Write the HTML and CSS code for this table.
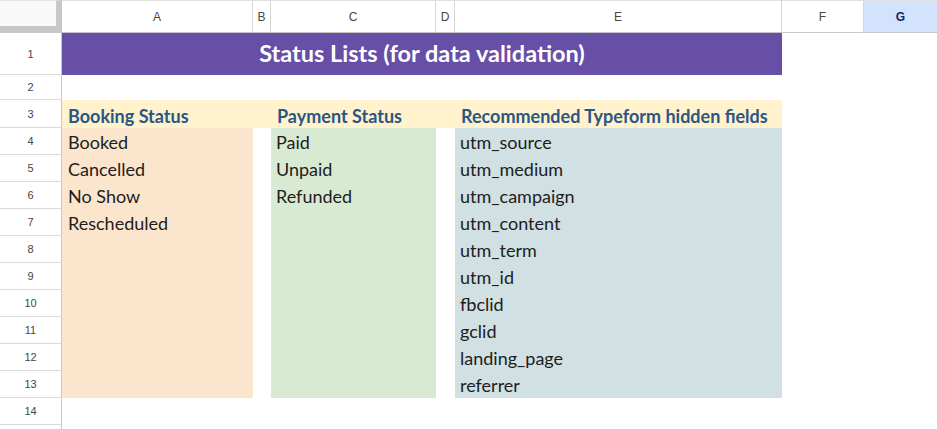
FILE: index.html
```html
<!DOCTYPE html>
<html>
<head>
<meta charset="utf-8">
<link rel="stylesheet" href="styles.css">
</head>
<body>
<div class="sheet">
  <div class="corner"></div>
  <div class="colh">A</div>
  <div class="colh">B</div>
  <div class="colh">C</div>
  <div class="colh">D</div>
  <div class="colh">E</div>
  <div class="colh">F</div>
  <div class="colh sel">G</div>

  <div class="rowh">1</div>
  <div class="cell title">Status Lists (for data validation)</div>
  <div class="cell"></div>
  <div class="cell"></div>

  <div class="rowh">2</div>
  <div class="cell"></div><div class="cell"></div><div class="cell"></div><div class="cell"></div><div class="cell"></div><div class="cell"></div><div class="cell"></div>

  <div class="rowh">3</div>
  <div class="cell hd">Booking Status</div>
  <div class="cell hd"></div>
  <div class="cell hd">Payment Status</div>
  <div class="cell hd"></div>
  <div class="cell hd">Recommended Typeform hidden fields</div>
  <div class="cell"></div><div class="cell"></div>

  <div class="rowh">4</div>
  <div class="cell bk">Booked</div><div class="cell"></div><div class="cell pay">Paid</div><div class="cell"></div><div class="cell utm">utm_source</div><div class="cell"></div><div class="cell"></div>
  <div class="rowh">5</div>
  <div class="cell bk">Cancelled</div><div class="cell"></div><div class="cell pay">Unpaid</div><div class="cell"></div><div class="cell utm">utm_medium</div><div class="cell"></div><div class="cell"></div>
  <div class="rowh">6</div>
  <div class="cell bk">No Show</div><div class="cell"></div><div class="cell pay">Refunded</div><div class="cell"></div><div class="cell utm">utm_campaign</div><div class="cell"></div><div class="cell"></div>
  <div class="rowh">7</div>
  <div class="cell bk">Rescheduled</div><div class="cell"></div><div class="cell pay"></div><div class="cell"></div><div class="cell utm">utm_content</div><div class="cell"></div><div class="cell"></div>
  <div class="rowh">8</div>
  <div class="cell bk"></div><div class="cell"></div><div class="cell pay"></div><div class="cell"></div><div class="cell utm">utm_term</div><div class="cell"></div><div class="cell"></div>
  <div class="rowh">9</div>
  <div class="cell bk"></div><div class="cell"></div><div class="cell pay"></div><div class="cell"></div><div class="cell utm">utm_id</div><div class="cell"></div><div class="cell"></div>
  <div class="rowh">10</div>
  <div class="cell bk"></div><div class="cell"></div><div class="cell pay"></div><div class="cell"></div><div class="cell utm">fbclid</div><div class="cell"></div><div class="cell"></div>
  <div class="rowh">11</div>
  <div class="cell bk"></div><div class="cell"></div><div class="cell pay"></div><div class="cell"></div><div class="cell utm">gclid</div><div class="cell"></div><div class="cell"></div>
  <div class="rowh">12</div>
  <div class="cell bk"></div><div class="cell"></div><div class="cell pay"></div><div class="cell"></div><div class="cell utm">landing_page</div><div class="cell"></div><div class="cell"></div>
  <div class="rowh">13</div>
  <div class="cell bk"></div><div class="cell"></div><div class="cell pay"></div><div class="cell"></div><div class="cell utm">referrer</div><div class="cell"></div><div class="cell"></div>
  <div class="rowh">14</div>
  <div class="cell"></div><div class="cell"></div><div class="cell"></div><div class="cell"></div><div class="cell"></div><div class="cell"></div><div class="cell"></div>
  <div class="rowh last"></div>
</div>
</body>
</html>
```
FILE: styles.css
```css
html, body {
  margin: 0;
  padding: 0;
  background: #ffffff;
  overflow: hidden;
}
.sheet {
  display: grid;
  grid-template-columns: 62px 191px 18px 165px 19px 327px 82px 73px;
  grid-template-rows: 33px 42px 25px 28px repeat(11, 27px) 4px;
  width: 937px;
  height: 429px;
  font-family: Lato, "Open Sans", sans-serif;
}
.corner {
  background: #f8f9fa;
  border-right: 6px solid #c7c7c7;
  border-bottom: 7px solid #c7c7c7;
  border-top: 1px solid #e3e3e3;
}
.colh {
  border-top: 1px solid #e1e1e1;
  border-right: 1px solid #d6d6d6;
  border-bottom: 1px solid #c7c7c7;
  display: flex;
  align-items: center;
  justify-content: center;
  font-family: "Liberation Sans", Arial, sans-serif;
  font-size: 12px;
  color: #444746;
  padding-top: 1px;
}
.colh.sel {
  background: #d3e3fd;
  color: #0b2a5b;
  font-weight: bold;
  border-right: none;
}
.rowh {
  border-right: 1px solid #c7c7c7;
  border-bottom: 1px solid #dadada;
  display: flex;
  align-items: center;
  justify-content: center;
  font-family: "Liberation Sans", Arial, sans-serif;
  font-size: 11px;
  color: #444746;
}
.rowh.last {
  border-bottom: none;
}
.cell {
  display: flex;
  align-items: flex-end;
  padding: 0 0 2px 6px;
  font-size: 18px;
  line-height: 22px;
  color: #1d1d1d;
  white-space: nowrap;
  overflow: visible;
}
.title {
  grid-column: span 5;
  background: #674ea7;
  color: #ffffff;
  font-weight: bold;
  font-size: 23.5px;
  justify-content: center;
  align-items: center;
  padding: 0 0 2px 0;
}
.hd {
  background: #fff2cc;
  color: #2a5686;
  font-weight: bold;
  padding-bottom: 1px;
}
.bk { background: #fce5cd; }
.pay { background: #d9ead3; padding-left: 5px; }
.utm { background: #d0e0e3; padding-left: 5px; }
```
